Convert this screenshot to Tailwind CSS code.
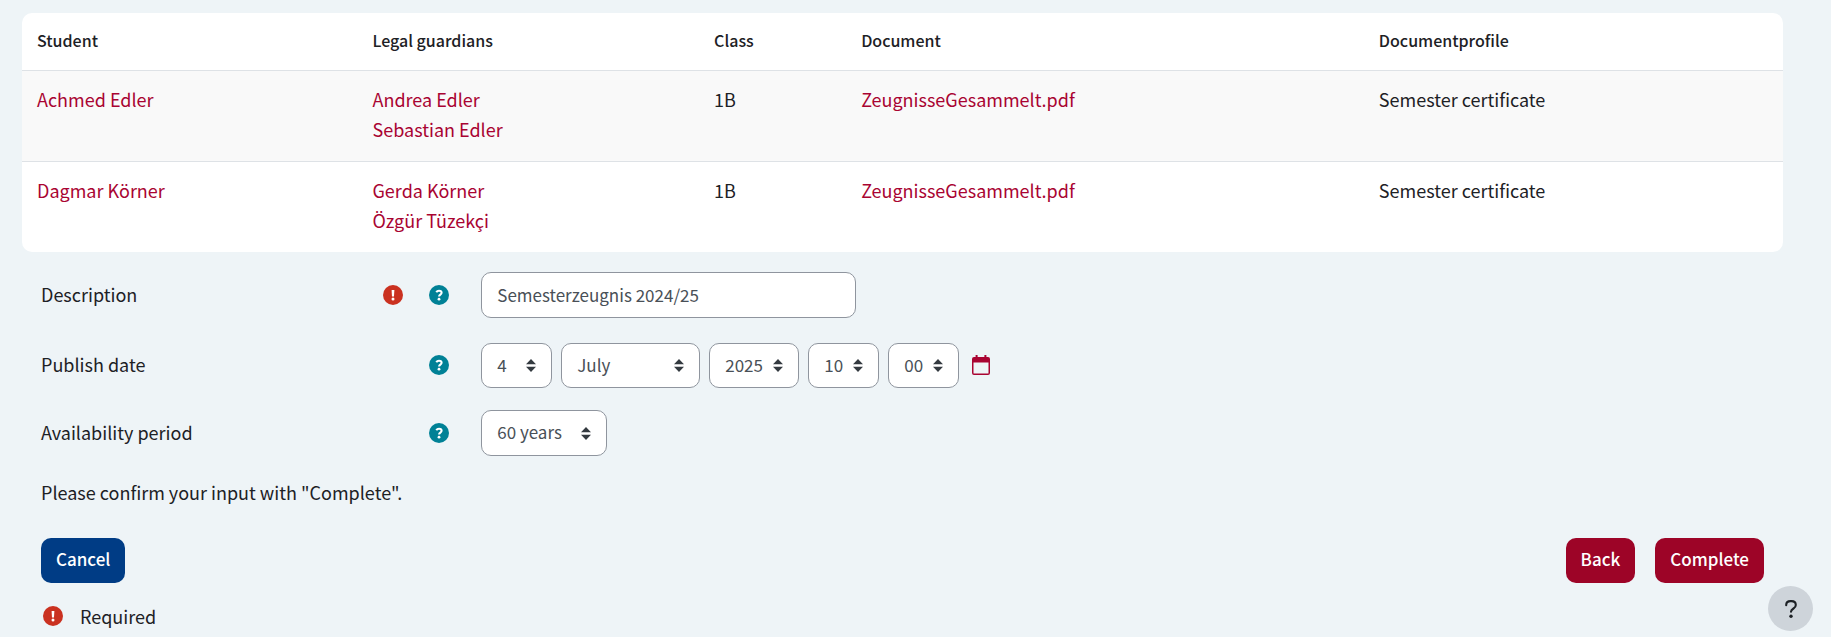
<!DOCTYPE html>
<html lang="en">
<head>
<meta charset="utf-8">
<meta name="viewport" content="width=device-width, initial-scale=1">
<title>Complete document upload</title>
<script src="https://cdn.jsdelivr.net/npm/@tailwindcss/browser@4"></script>
</head>
<body class="min-h-screen bg-[#eef4f7] font-['Noto_Sans_CJK_SC','Noto_Sans',sans-serif] text-[18px] leading-[30px] text-[#1d2125]">
<svg class="hidden" aria-hidden="true">
  <symbol id="required" viewBox="0 0 20 20">
    <circle cx="10" cy="10" r="10" fill="#ca3120"/>
    <path d="M8.6 5h2.8l-.4 6.4H9z" fill="#fff"/><circle cx="10" cy="13.9" r="1.5" fill="#fff"/>
  </symbol>
  <symbol id="help" viewBox="0 0 20 20">
    <circle cx="10" cy="10" r="10" fill="#008196"/>
    <path d="M7.3 7.2C7.9 6.2 8.8 5.8 10 5.8c1.500 0 2.600.8 2.600 2 0 1.800-2.500 1.800-2.500 3.700" fill="none" stroke="#fff" stroke-width="2.100"/><circle cx="10" cy="14.200" r="1.400" fill="#fff"/>
  </symbol>
  <symbol id="updown" viewBox="0 0 10 13">
    <path d="M5 0l5 5.200H0zM5 13L0 7.800h10z" fill="#343a40"/>
  </symbol>
</svg>
<main class="pt-[13px] pr-12 pl-[22px]">
  <div class="overflow-hidden rounded-[10px] bg-white">
    <table class="w-full table-fixed border-collapse text-left">
      <colgroup><col class="w-[19.05%]"><col class="w-[19.4%]"><col class="w-[8.35%]"><col class="w-[29.4%]"><col></colgroup>
      <thead class="text-[16px] leading-[27px]">
        <tr class="border-b border-[#dee2e6]">
          <th class="px-[15px] pt-[14px] pb-4 font-medium">Student</th>
          <th class="px-[15px] pt-[14px] pb-4 font-medium">Legal guardians</th>
          <th class="px-[15px] pt-[14px] pb-4 font-medium">Class</th>
          <th class="px-[15px] pt-[14px] pb-4 font-medium">Document</th>
          <th class="px-[15px] pt-[14px] pb-4 font-medium">Documentprofile</th>
        </tr>
      </thead>
      <tbody class="align-top">
        <tr class="border-b border-[#dee2e6] bg-[#f9f9f9]">
          <td class="px-[15px] pt-[13px] pb-[17px]"><a href="#" class="text-[#a90432]">Achmed Edler</a></td>
          <td class="px-[15px] pt-[13px] pb-[17px]"><a href="#" class="block text-[#a90432]">Andrea Edler</a><a href="#" class="block text-[#a90432]">Sebastian Edler</a></td>
          <td class="px-[15px] pt-[13px] pb-[17px]">1B</td>
          <td class="px-[15px] pt-[13px] pb-[17px]"><a href="#" class="text-[#a90432]">ZeugnisseGesammelt.pdf</a></td>
          <td class="px-[15px] pt-[13px] pb-[17px]">Semester certificate</td>
        </tr>
        <tr>
          <td class="px-[15px] pt-[13px] pb-[17px]"><a href="#" class="text-[#a90432]">Dagmar Körner</a></td>
          <td class="px-[15px] pt-[13px] pb-[17px]"><a href="#" class="block text-[#a90432]">Gerda Körner</a><a href="#" class="block text-[#a90432]">Özgür Tüzekçi</a></td>
          <td class="px-[15px] pt-[13px] pb-[17px]">1B</td>
          <td class="px-[15px] pt-[13px] pb-[17px]"><a href="#" class="text-[#a90432]">ZeugnisseGesammelt.pdf</a></td>
          <td class="px-[15px] pt-[13px] pb-[17px]">Semester certificate</td>
        </tr>
      </tbody>
    </table>
  </div>

  <form class="pt-5">
    <div class="flex items-center">
      <div class="flex w-1/4 items-center gap-[26px] pr-[13px] pl-[19px]">
        <label for="description" class="flex-1 pb-[2px]">Description</label>
        <svg class="size-5" role="img" aria-label="Required"><use href="#required"/></svg>
        <button type="button" aria-label="Help with Description"><svg class="size-5"><use href="#help"/></svg></button>
      </div>
      <div class="flex-1 pl-[19px]">
        <input id="description" type="text" value="Semesterzeugnis 2024/25" class="h-[46px] w-[375px] rounded-[10px] border border-[#8f959e] bg-white px-[15px] pb-[2px] text-[17px] text-[#495057]">
      </div>
    </div>

    <div class="mt-[25px] flex items-center">
      <div class="flex w-1/4 items-center gap-[26px] pr-[13px] pb-[2px] pl-[19px]">
        <label for="day" class="flex-1 pb-[2px]">Publish date</label>
        <button type="button" aria-label="Help with Publish date"><svg class="size-5"><use href="#help"/></svg></button>
      </div>
      <div class="flex flex-1 items-center gap-[9px] pl-[19px] text-[17px] text-[#495057]">
        <div class="relative"><select id="day" class="block h-[45px] w-[71px] appearance-none rounded-[10px] border border-[#8f959e] bg-white pb-[2px] pl-[15px]"><option>4</option></select><svg class="pointer-events-none absolute top-4 right-4 h-[13px] w-[10px]"><use href="#updown"/></svg></div>
        <div class="relative"><select aria-label="Month" class="block h-[45px] w-[139px] appearance-none rounded-[10px] border border-[#8f959e] bg-white pb-[2px] pl-[15px]"><option>July</option></select><svg class="pointer-events-none absolute top-4 right-4 h-[13px] w-[10px]"><use href="#updown"/></svg></div>
        <div class="relative"><select aria-label="Year" class="block h-[45px] w-[90px] appearance-none rounded-[10px] border border-[#8f959e] bg-white pb-[2px] pl-[15px]"><option>2025</option></select><svg class="pointer-events-none absolute top-4 right-4 h-[13px] w-[10px]"><use href="#updown"/></svg></div>
        <div class="relative"><select aria-label="Hour" class="block h-[45px] w-[71px] appearance-none rounded-[10px] border border-[#8f959e] bg-white pb-[2px] pl-[15px]"><option>10</option></select><svg class="pointer-events-none absolute top-4 right-4 h-[13px] w-[10px]"><use href="#updown"/></svg></div>
        <div class="relative"><select aria-label="Minute" class="block h-[45px] w-[71px] appearance-none rounded-[10px] border border-[#8f959e] bg-white pb-[2px] pl-[15px]"><option>00</option></select><svg class="pointer-events-none absolute top-4 right-4 h-[13px] w-[10px]"><use href="#updown"/></svg></div>
        <button type="button" aria-label="Calendar" class="pb-[2px] pl-1">
          <svg class="h-5 w-[18px]" viewBox="0 0 18 20"><path d="M3.600 0h2v3h-2zM12.400 0h2v3h-2z" fill="#a90432"/><path d="M2 2h14a2 2 0 0 1 2 2v14a2 2 0 0 1-2 2H2a2 2 0 0 1-2-2V4a2 2 0 0 1 2-2zM1.500 7.500V18a.5.5 0 0 0 .5.5h14a.5.5 0 0 0 .5-.5V7.500z" fill="#a90432" fill-rule="evenodd"/></svg>
        </button>
      </div>
    </div>

    <div class="mt-[22px] flex items-center">
      <div class="flex w-1/4 items-center gap-[26px] pr-[13px] pl-[19px]">
        <label for="period" class="flex-1 pb-[2px]">Availability period</label>
        <button type="button" aria-label="Help with Availability period"><svg class="size-5"><use href="#help"/></svg></button>
      </div>
      <div class="flex-1 pl-[19px] text-[17px] text-[#495057]">
        <div class="relative w-[126px]"><select id="period" class="block h-[46px] w-full appearance-none rounded-[10px] border border-[#8f959e] bg-white pb-[2px] pl-[15px]"><option>60 years</option></select><svg class="pointer-events-none absolute top-[17px] right-4 h-[13px] w-[10px]"><use href="#updown"/></svg></div>
      </div>
    </div>

    <p class="mt-[21px] px-[19px]">Please confirm your input with "Complete".</p>

    <div class="mt-[31px] flex gap-5 px-[19px] text-[17px] font-medium text-white">
      <button type="button" class="mr-auto h-[45px] rounded-[10px] bg-[#003c85] px-[15px] pb-[3px]">Cancel</button>
      <button type="button" class="h-[45px] rounded-[10px] bg-[#9d0427] px-[15px] pb-[3px]">Back</button>
      <button type="submit" class="h-[45px] rounded-[10px] bg-[#9d0427] px-[15px] pb-[3px]">Complete</button>
    </div>

    <div class="mt-[18px] flex items-center gap-[17px] pl-[21px]">
      <svg class="size-5" aria-hidden="true"><use href="#required"/></svg>
      <span>Required</span>
    </div>
  </form>
</main>
<button type="button" aria-label="Open help menu" class="fixed right-[18px] bottom-[6px] flex size-[45px] items-center justify-center rounded-full bg-[#ced4da]">
  <svg class="h-[18px] w-[12px]" viewBox="0 0 12 18"><path d="M1.200 5.300V5c0-2.300 1.800-3.900 4.300-3.900h1c2.500 0 4.300 1.600 4.300 3.900 0 1.700-.9 2.700-2.300 3.500C6.800 9.500 6 10.100 6 11.800" fill="none" stroke="#1d2125" stroke-width="2.100" stroke-linecap="round"/><circle cx="6" cy="16.200" r="1.700" fill="#1d2125"/></svg>
</button>
</body>
</html>
